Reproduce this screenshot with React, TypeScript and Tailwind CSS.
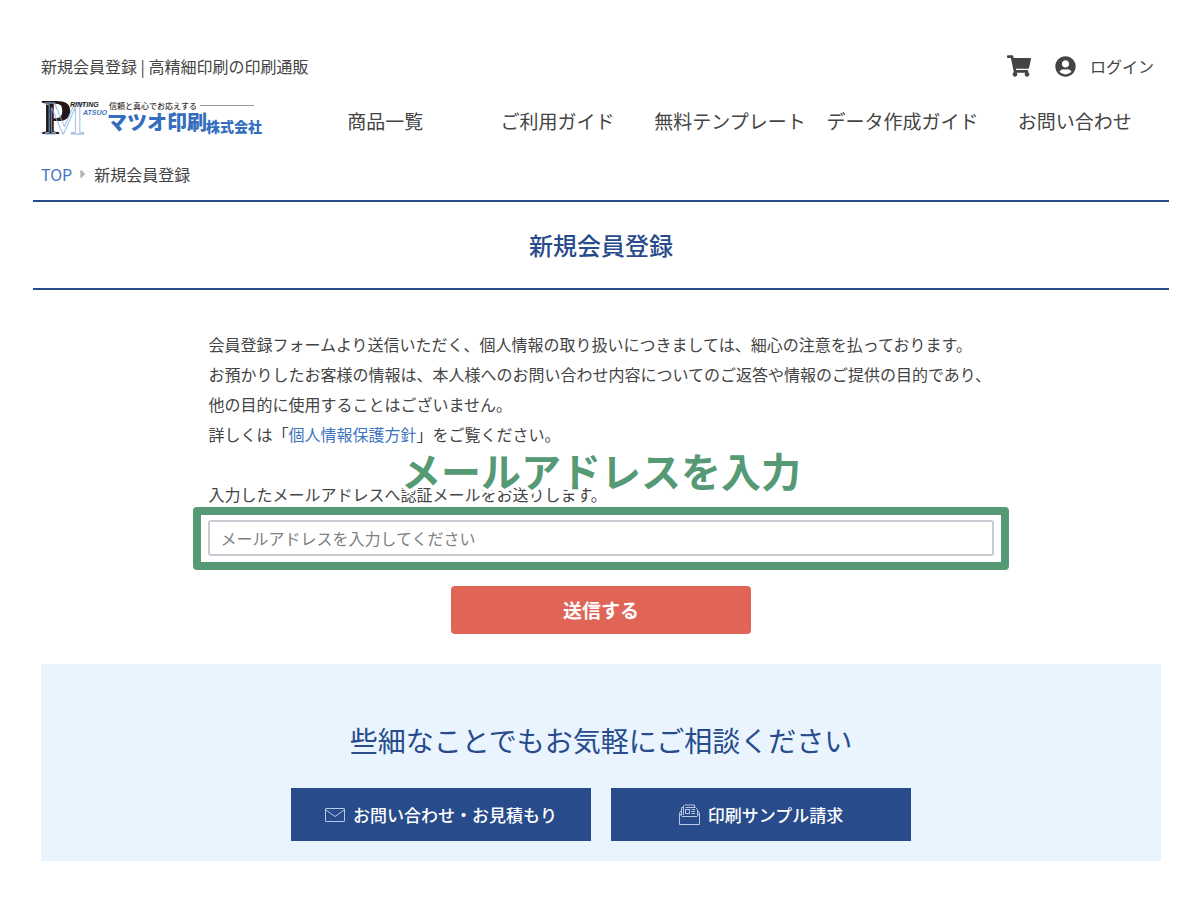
import { FaCaretRight, FaShoppingCart, FaUserCircle } from "react-icons/fa";

const navItems = ["商品一覧", "ご利用ガイド", "無料テンプレート", "データ作成ガイド", "お問い合わせ"];

export default function App() {
  return (
    <div className="min-h-screen bg-white pt-12 pr-[31px] pb-11 pl-8 font-['Noto_Sans_CJK_JP',sans-serif] text-base text-[#444]">
      <Header />
      <main>
        <h1 className="mx-px border-y-2 border-[#284b8b] py-6 text-center text-2xl leading-[38px] font-medium text-[#284b8b]">
          新規会員登録
        </h1>
        <RegisterForm />
      </main>
      <Contact />
    </div>
  );
}

function Header() {
  return (
    <header className="px-[9px]">
      <div className="flex h-9 items-center justify-between">
        <p>新規会員登録 | 高精細印刷の印刷通販</p>
        <div className="flex items-center pr-[7px]">
          <a href="#cart" aria-label="カート">
            <FaShoppingCart size="24" />
          </a>
          <a href="#login" className="ml-6 flex items-center gap-[14px]">
            <FaUserCircle size="21" />
            <span>ログイン</span>
          </a>
        </div>
      </div>
      <div className="mt-[7px] flex h-[60px] items-center">
        <a href="#top" aria-label="マツオ印刷株式会社" className="mr-[34px] shrink-0">
          <Logo />
        </a>
        <nav className="grid flex-1 grid-cols-5 text-center text-[19px] whitespace-nowrap">
          {navItems.map((item) => (
            <a key={item} href="#nav">
              {item}
            </a>
          ))}
        </nav>
      </div>
      <nav className="mb-[3px] flex h-[46px] items-center gap-1.5" aria-label="パンくず">
        <a href="#top" className="text-[#3f74c1]">
          TOP
        </a>
        <FaCaretRight size="14" className="-mx-0.5 text-[#b5b5b5]" />
        <span>新規会員登録</span>
      </nav>
    </header>
  );
}

function Logo() {
  return (
    <svg width="224" height="40" viewBox="0 0 224 40" className="block overflow-visible">
      <g fontFamily="Liberation Serif, serif">
        <text x="0" y="33" fontSize="50" fontWeight="700" fill="#231815">
          P
        </text>
        <text x="3" y="33" fontSize="46" fill="none" stroke="#8db2df" strokeWidth="0.8">
          M
        </text>
      </g>
      <g fontFamily="Liberation Sans, sans-serif" fontSize="7" fontWeight="700" fontStyle="italic">
        <text x="29" y="6" fill="#231815">
          RINTING
        </text>
        <text x="42" y="14" fill="#3f74c1">
          ATSUO
        </text>
      </g>
      <g fontFamily="Noto Sans CJK JP, sans-serif">
        <text x="68" y="8" fontSize="8" fontWeight="500" fill="#3a3431">
          信頼と真心でお応えする
        </text>
        <text x="66" y="29" fontSize="20" fontWeight="900" fill="#356ebd">
          マツオ印刷
        </text>
        <text x="165" y="31" fontSize="14" fontWeight="900" fill="#356ebd">
          株式会社
        </text>
      </g>
      <path d="M159 4.5 H213" stroke="#999" />
    </svg>
  );
}

function RegisterForm() {
  return (
    <form className="mx-auto w-[69%] pt-[39px]">
      <div className="leading-[30px] whitespace-nowrap">
        <p>
          会員登録フォームより送信いただく、個人情報の取り扱いにつきましては、細心の注意を払っております。
          <br />
          お預かりしたお客様の情報は、本人様へのお問い合わせ内容についてのご返答や情報のご提供の目的であり、
          <br />
          他の目的に使用することはございません。
          <br />
          詳しくは「
          <a href="#privacy" className="text-[#3f74c1]">
            個人情報保護方針
          </a>
          」をご覧ください。
        </p>
        <label htmlFor="email" className="mt-[30px] block">
          入力したメールアドレスへ認証メールをお送りします。
        </label>
      </div>
      <div className="relative mt-[11px]">
        <input
          id="email"
          type="email"
          placeholder="メールアドレスを入力してください"
          className="block h-9 w-full rounded-[3px] border-2 border-[#c8cad2] px-[10px] text-base placeholder:text-[#808080]"
        />
        <div className="pointer-events-none absolute -inset-x-[15px] -top-[13px] -bottom-[14px] rounded-sm border-8 border-[#559975]" />
        <p className="pointer-events-none absolute inset-x-0 -top-20 text-center text-[40px] leading-[60px] font-bold whitespace-nowrap text-[#559975] [-webkit-text-stroke:8px_white] [paint-order:stroke_fill]">
          メールアドレスを入力
        </p>
      </div>
      <button
        type="button"
        className="mx-auto mt-[30px] block h-12 w-[300px] rounded bg-[#e06557] text-[19px] font-bold text-white"
      >
        送信する
      </button>
    </form>
  );
}

function Contact() {
  return (
    <section className="mx-[9px] mt-[30px] bg-[#e9f4ff] pt-14 pb-5 text-center">
      <h2 className="text-[28px] leading-10 text-[#284b8b]">些細なことでもお気軽にご相談ください</h2>
      <div className="mt-7 flex justify-center gap-5 text-[17px] font-medium text-white">
        <a href="#contact" className="flex h-[53px] w-[300px] items-center justify-center gap-2 bg-[#284b8b]">
          <MailIcon />
          お問い合わせ・お見積もり
        </a>
        <a href="#sample" className="flex h-[53px] w-[300px] items-center justify-center gap-2 bg-[#284b8b]">
          <SampleIcon />
          印刷サンプル請求
        </a>
      </div>
    </section>
  );
}

function MailIcon() {
  return (
    <svg width="20" height="20" viewBox="0 0 20 20" fill="none" stroke="#b9c9e4" aria-hidden="true">
      <rect x="0.5" y="3.5" width="19" height="13" rx="0.5" />
      <path d="M1 5 L10 11.5 L19 5" />
    </svg>
  );
}

function SampleIcon() {
  return (
    <svg width="21" height="22" viewBox="0 0 21 22" fill="none" stroke="#b9c9e4" aria-hidden="true">
      <path d="M0.5 9 V20.5 H20.5 V9 M0.5 9 L2.5 6.5 M20.5 9 L18.5 6.5" />
      <path d="M2.5 11 V3.5 H4.5 V1.5 M4.5 3 V11 M5.5 1 H15.5 V3.5 M6.5 3.5 H16.5 L18.5 5.5 V11 M1 10 L3 12.5 H18 L20 10" />
      <rect x="6.5" y="5.5" width="4" height="4" />
      <path d="M12.5 5.5 H16 M12.5 7.5 H16 M12.5 9.5 H16" />
    </svg>
  );
}
